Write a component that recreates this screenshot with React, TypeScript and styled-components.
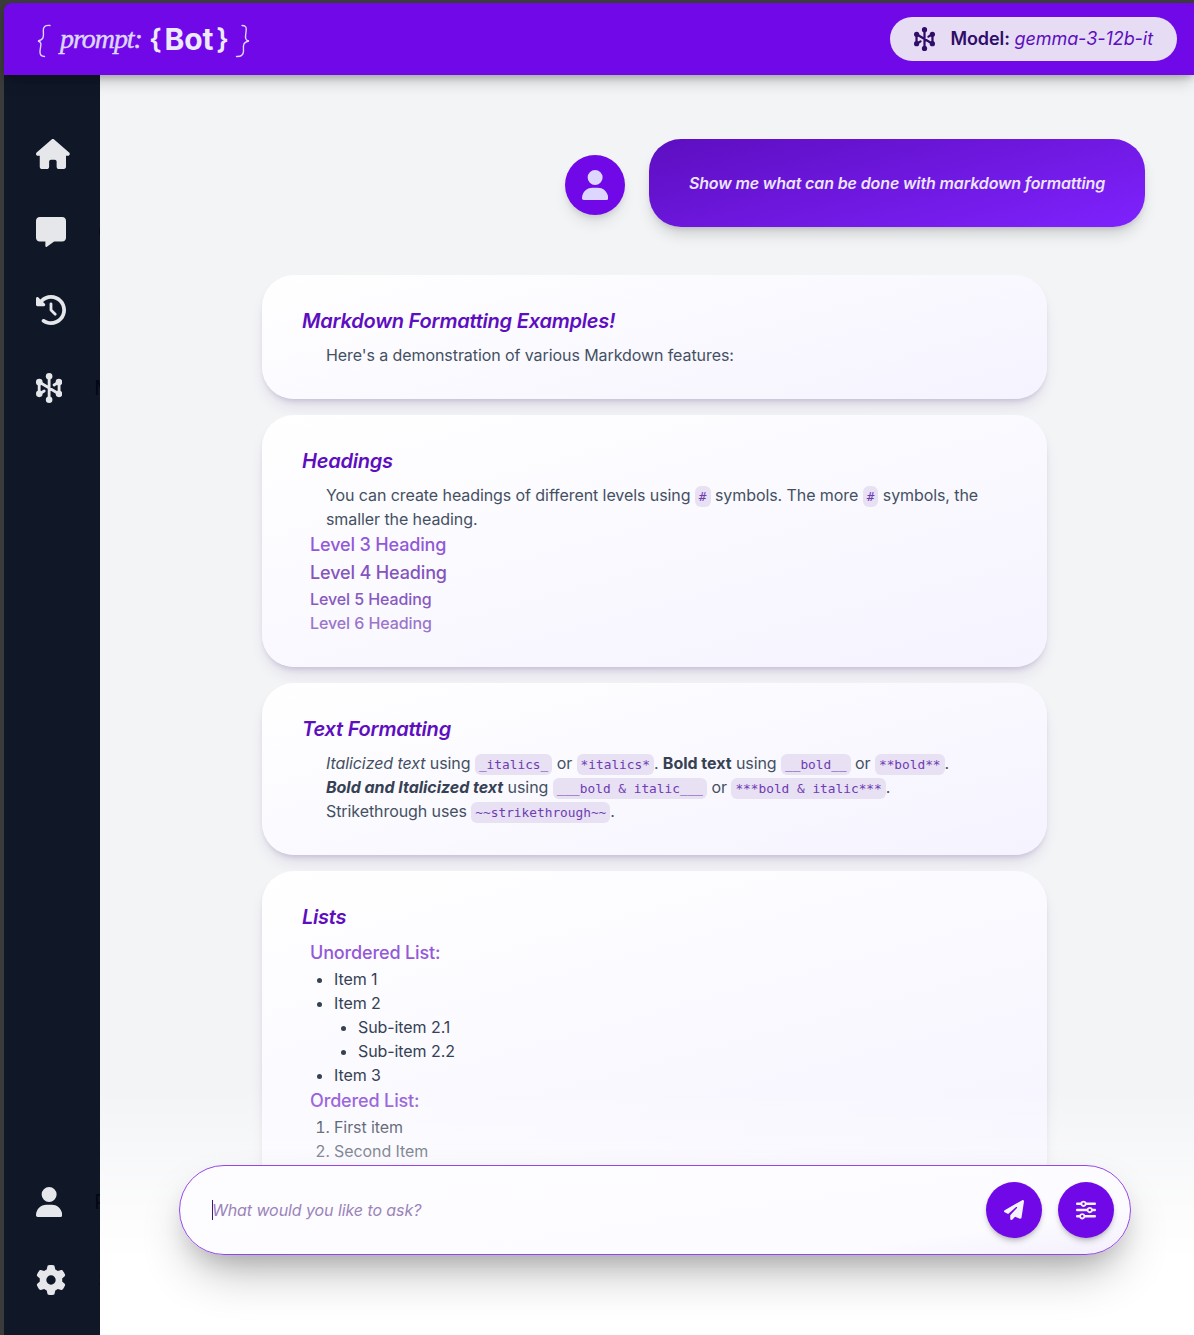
import React from "react";
import styled, { createGlobalStyle, css } from "styled-components";
import {
  FaHouse,
  FaMessage,
  FaClockRotateLeft,
  FaUser,
  FaGear,
  FaPaperPlane,
  FaSliders,
} from "react-icons/fa6";

const GlobalStyle = createGlobalStyle`
  *, *::before, *::after { box-sizing: border-box; }
  body {
    margin: 0;
    font-family: Inter, "Liberation Sans", sans-serif;
    font-size: 16px;
    line-height: 24px;
    letter-spacing: -0.08px;
    color: #364153;
  }
  h1, h2, h3, h4, h5, h6, p, ul, ol { margin: 0; padding: 0; }
`;

const Frame = styled.div`
  width: 1194px;
  height: 1335px;
  padding: 3px 0 0 4px;
  background: #3b3b3b;
  display: flex;
  flex-direction: column;
  overflow: hidden;
`;

const Header = styled.header`
  position: relative;
  z-index: 2;
  flex: none;
  height: 72px;
  padding: 0 17px 0 32px;
  display: flex;
  align-items: center;
  justify-content: space-between;
  background: #7008e7;
  border-top-left-radius: 8px;
  box-shadow: 0 10px 15px -3px rgba(0, 0, 0, 0.18), 0 4px 6px -1px rgba(0, 0, 0, 0.18);
`;

const Logo = styled.div`
  display: flex;
  align-items: center;
  height: 44px;
  color: #ede9fe;
`;

const ThinBrace = styled.svg<{ $gap?: number }>`
  width: 15px;
  height: 34px;
  margin-top: 3px;
  margin-left: ${(p) => p.$gap ?? 0}px;
  fill: none;
  stroke: #ddd6ff;
  stroke-width: 1.4;
  stroke-linecap: round;
`;

const LogoPrompt = styled.span`
  margin-left: 9px;
  width: 81px;
  font: italic 400 28px/40px "Liberation Serif", serif;
  letter-spacing: -1.05px;
  color: #ddd6ff;
  -webkit-text-stroke: 0.45px #ddd6ff;
`;

const LogoBot = styled.span`
  display: flex;
  gap: 3px;
  margin-left: 8px;
  font-weight: 700;
  font-size: 30px;
  line-height: 40px;
  letter-spacing: -0.2px;
`;

const LogoBrace = styled.span`
  font-size: 28px;
  font-weight: 600;
`;

const ModelPill = styled.div`
  height: 44px;
  padding: 0 24px;
  display: flex;
  align-items: center;
  gap: 15px;
  border-radius: 24px;
  background: #e6dcf4;
  color: #2f0d68;
  font-size: 18px;
  line-height: 28px;
  font-weight: 600;
  letter-spacing: -0.06px;
  white-space: nowrap;
`;

const ModelName = styled.em`
  font-weight: 400;
  color: #5d0ec0;
`;

const Body = styled.div`
  flex: 1;
  min-height: 0;
  display: grid;
  grid-template-columns: 96px 1fr;
`;

const Sidebar = styled.nav`
  padding: 56px 0 32px 32px;
  display: flex;
  flex-direction: column;
  justify-content: space-between;
  background: #101828;
  overflow: hidden;
`;

const NavGroup = styled.div`
  display: flex;
  flex-direction: column;
  gap: 32px;
`;

const NavItem = styled.a`
  height: 46px;
  display: flex;
  align-items: center;
  gap: 32px;
  font-size: 20px;
  color: #030712;
  white-space: nowrap;
`;

const IconBox = styled.span<{ $w: number; $h: number; $color?: string }>`
  flex: none;
  display: flex;
  color: ${(p) => p.$color ?? "#e5e7eb"};
  svg {
    width: ${(p) => p.$w}px;
    height: ${(p) => p.$h}px;
  }
`;

const Main = styled.main`
  position: relative;
  min-width: 0;
  overflow: hidden;
  background: #f3f4f6;
`;

const Conversation = styled.div`
  height: 1135px;
  padding: 64px 49px 0 162px;
  overflow: hidden;
`;

const UserRow = styled.div`
  display: flex;
  justify-content: flex-end;
  align-items: center;
  gap: 24px;
  margin-bottom: 48px;
`;

const Avatar = styled.div`
  width: 60px;
  height: 60px;
  margin-top: 4px;
  display: flex;
  align-items: center;
  justify-content: center;
  border-radius: 50%;
  background: #7008e7;
  box-shadow: 0 10px 15px -3px rgba(0, 0, 0, 0.1), 0 4px 6px -2px rgba(0, 0, 0, 0.12);
`;

const UserBubble = styled.div`
  width: 496px;
  height: 88px;
  display: flex;
  align-items: center;
  justify-content: center;
  border-radius: 32px;
  background: linear-gradient(165deg, #5d0ec0, #7f22fe);
  box-shadow: 0 10px 15px -3px rgba(0, 0, 0, 0.15), 0 4px 6px -3px rgba(0, 0, 0, 0.15);
  color: #ede4ff;
  font-style: italic;
  font-weight: 600;
  letter-spacing: -0.13px;
  white-space: nowrap;
`;

const Cards = styled.div`
  width: 785px;
  display: flex;
  flex-direction: column;
  gap: 16px;
`;

const Card = styled.section`
  padding: 32px 40px;
  border-radius: 32px;
  background: linear-gradient(165deg, #ffffff, #f5f3ff);
  box-shadow: 0 10px 15px -3px rgba(47, 13, 104, 0.1), 0 4px 6px -3px rgba(47, 13, 104, 0.2);
`;

const CardTitle = styled.h2`
  margin-bottom: 8px;
  font-size: 20px;
  line-height: 28px;
  font-weight: 600;
  font-style: italic;
  letter-spacing: -0.22px;
  color: #5d0ec0;
`;

const Text = styled.p`
  padding-left: 24px;
  color: #445062;

  strong {
    color: #364153;
    letter-spacing: -0.03px;
  }
`;

const SubHeading = styled.h3<{ $size?: number; $line?: number; $color?: string }>`
  margin-left: 8px;
  font-size: ${(p) => p.$size ?? 18}px;
  line-height: ${(p) => p.$line ?? 28}px;
  font-weight: 500;
  letter-spacing: ${(p) => (p.$size ? -0.08 : -0.14)}px;
  color: ${(p) => p.$color ?? "#9259d8"};
`;

const Code = styled.code`
  padding: 3px 4px;
  border-radius: 6px;
  background: #e8e0f3;
  color: #6e3cb4;
  font-family: "DejaVu Sans Mono", monospace;
  font-size: 12.8px;
  line-height: 1;
  letter-spacing: 0;
`;

const listStyle = css`
  padding-left: 32px;
  & & { padding-left: 24px; }
`;

const Bullets = styled.ul`
  ${listStyle}
  list-style: disc;
`;

const Numbers = styled.ol`
  ${listStyle}
  list-style: decimal;
`;

const BottomFade = styled.div`
  position: absolute;
  inset: auto 0 0 0;
  height: 248px;
  background: linear-gradient(to bottom, rgba(255, 255, 255, 0), #ffffff 69%);
`;

const Composer = styled.div`
  position: absolute;
  left: 79px;
  bottom: 80px;
  width: 952px;
  height: 90px;
  padding: 0 16px 0 32px;
  display: flex;
  align-items: center;
  gap: 16px;
  border: 1px solid #9546ea;
  border-radius: 45px;
  background: linear-gradient(172deg, #fdfcff 0%, #fcfbff 80%, #f3effd 100%);
  box-shadow: 0 25px 50px -12px rgba(0, 0, 0, 0.3), 0 12px 24px -8px rgba(0, 0, 0, 0.16);
`;

const Prompt = styled.div`
  flex: 1;
  display: flex;
  align-items: center;
  font-style: italic;
  color: #9a84b9;
`;

const Caret = styled.span`
  width: 1px;
  height: 20px;
  margin-right: -1px;
  background: #3c1a7d;
`;

const RoundButton = styled.button`
  width: 56px;
  height: 56px;
  padding: 0;
  border: 0;
  display: flex;
  align-items: center;
  justify-content: center;
  border-radius: 50%;
  background: #7008e7;
  box-shadow: 0 4px 6px -1px rgba(0, 0, 0, 0.2), 0 2px 4px -2px rgba(0, 0, 0, 0.2);
`;

const NodesIcon = () => (
  <svg viewBox="0 0 448 512" fill="currentColor" stroke="currentColor">
    <g strokeWidth="48" strokeLinecap="round" fill="none">
      <path d="M224 50V462M54 154V358M394 154V358M54 154L394 358M54 358L140 306M394 154L308 206" />
    </g>
    <g stroke="none">
      <circle cx="224" cy="56" r="56" />
      <circle cx="224" cy="456" r="56" />
      <circle cx="56" cy="156" r="56" />
      <circle cx="56" cy="356" r="56" />
      <circle cx="392" cy="156" r="56" />
      <circle cx="392" cy="356" r="56" />
    </g>
  </svg>
);

const mainNav = [
  { label: "Home", icon: <FaHouse />, w: 33.75 },
  { label: "Chat", icon: <FaMessage />, w: 30 },
  { label: "History", icon: <FaClockRotateLeft />, w: 30 },
  { label: "Models", icon: <NodesIcon />, w: 26.25 },
];

const footNav = [
  { label: "Profile", icon: <FaUser />, w: 26.25 },
  { label: "Settings", icon: <FaGear />, w: 30 },
];

const Nav = ({ items }: { items: typeof mainNav }) => (
  <NavGroup>
    {items.map((item) => (
      <NavItem key={item.label}>
        <IconBox $w={item.w} $h={30}>{item.icon}</IconBox>
        {item.label}
      </NavItem>
    ))}
  </NavGroup>
);

export default function App() {
  return (
    <>
      <GlobalStyle />
      <Frame>
        <Header>
          <Logo>
            <ThinBrace viewBox="0 0 15 34">
              <path d="M14 1.5C9 1 7 3 7.300 7C7.600 11 8.500 16 2 17C7 18 4 23 4 28C4 31 5 32.500 8.500 32.500" />
            </ThinBrace>
            <LogoPrompt>prompt:</LogoPrompt>
            <LogoBot>
              <LogoBrace>{"{"}</LogoBrace>
              Bot
              <LogoBrace>{"}"}</LogoBrace>
            </LogoBot>
            <ThinBrace viewBox="0 0 15 34" $gap={6}>
              <path d="M7 1.500C10.500 1.500 11.500 3 11.200 6C11 11 8.500 16 14 17C7 18 8.500 23 8.500 27C8.500 31 6 32.800 1.500 32.500" />
            </ThinBrace>
          </Logo>
          <ModelPill>
            <IconBox $w={21} $h={24} $color="#2f0d68"><NodesIcon /></IconBox>
            <span>
              Model: <ModelName>gemma-3-12b-it</ModelName>
            </span>
          </ModelPill>
        </Header>
        <Body>
          <Sidebar>
            <Nav items={mainNav} />
            <Nav items={footNav} />
          </Sidebar>
          <Main>
            <Conversation>
              <UserRow>
                <Avatar>
                  <IconBox $w={26.25} $h={30} $color="#ddd6ff"><FaUser /></IconBox>
                </Avatar>
                <UserBubble>Show me what can be done with markdown formatting</UserBubble>
              </UserRow>
              <Cards>
                <Card>
                  <CardTitle>Markdown Formatting Examples!</CardTitle>
                  <Text>Here's a demonstration of various Markdown features:</Text>
                </Card>
                <Card>
                  <CardTitle>Headings</CardTitle>
                  <Text>
                    You can create headings of different levels using <Code>#</Code> symbols. The more{" "}
                    <Code>#</Code> symbols, the smaller the heading.
                  </Text>
                  <SubHeading>Level 3 Heading</SubHeading>
                  <SubHeading as="h4" $color="#8455bd">Level 4 Heading</SubHeading>
                  <SubHeading as="h5" $size={16} $line={24} $color="#8859bf">Level 5 Heading</SubHeading>
                  <SubHeading as="h6" $size={16} $line={24} $color="#9a76cb">Level 6 Heading</SubHeading>
                </Card>
                <Card>
                  <CardTitle>Text Formatting</CardTitle>
                  <Text>
                    <em>Italicized text</em> using <Code>_italics_</Code> or <Code>*italics*</Code>.{" "}
                    <strong>Bold text</strong> using <Code>__bold__</Code> or <Code>**bold**</Code>.
                    <br />
                    <strong><em>Bold and Italicized text</em></strong> using{" "}
                    <Code>___bold &amp; italic___</Code> or <Code>***bold &amp; italic***</Code>.
                    <br />
                    Strikethrough uses <Code>~~strikethrough~~</Code>.
                  </Text>
                </Card>
                <Card>
                  <CardTitle>Lists</CardTitle>
                  <SubHeading>Unordered List:</SubHeading>
                  <Bullets>
                    <li>Item 1</li>
                    <li>
                      Item 2
                      <Bullets>
                        <li>Sub-item 2.1</li>
                        <li>Sub-item 2.2</li>
                      </Bullets>
                    </li>
                    <li>Item 3</li>
                  </Bullets>
                  <SubHeading>Ordered List:</SubHeading>
                  <Numbers>
                    <li>First item</li>
                    <li>Second Item</li>
                  </Numbers>
                </Card>
              </Cards>
            </Conversation>
            <BottomFade />
            <Composer>
              <Prompt>
                <Caret />
                What would you like to ask?
              </Prompt>
              <RoundButton>
                <IconBox $w={20} $h={20} $color="#f5f3ff"><FaPaperPlane /></IconBox>
              </RoundButton>
              <RoundButton>
                <IconBox $w={20} $h={20} $color="#f5f3ff"><FaSliders /></IconBox>
              </RoundButton>
            </Composer>
          </Main>
        </Body>
      </Frame>
    </>
  );
}
